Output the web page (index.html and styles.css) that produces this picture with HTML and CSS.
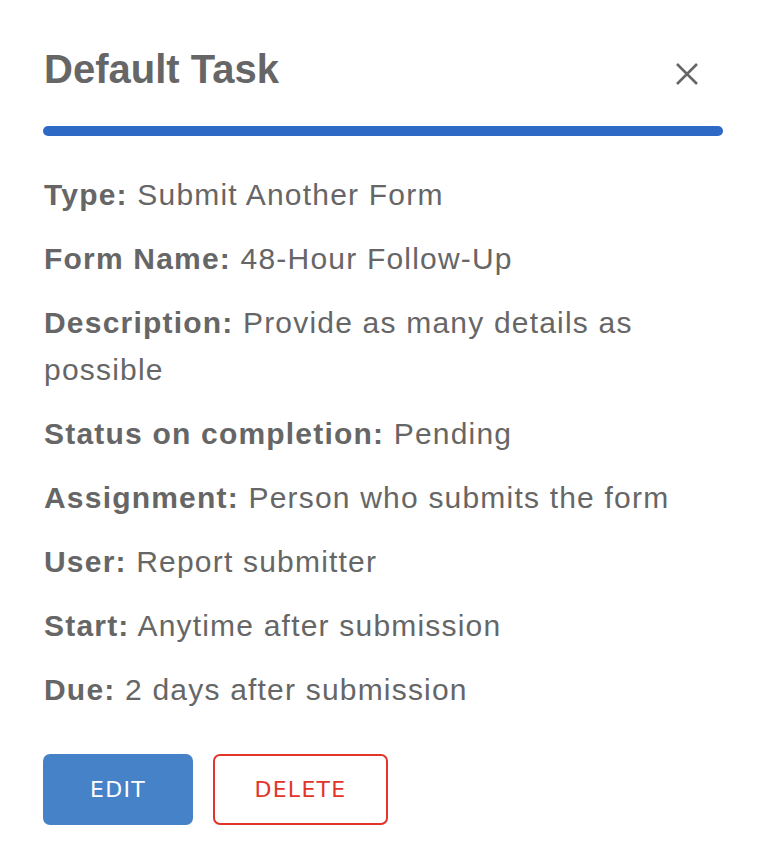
FILE: index.html
```html
<!DOCTYPE html>
<html>
<head>
<meta charset="utf-8">
<link rel="stylesheet" href="styles.css">
</head>
<body>
<div class="panel">
  <div class="header">
    <h1 class="title">Default Task</h1>
    <button class="close" aria-label="Close">
      <svg width="24" height="24" viewBox="0 0 24 24"><path d="M2 2 L22 22 M22 2 L2 22" stroke="#666" stroke-width="2.6" fill="none"/></svg>
    </button>
  </div>
  <div class="bar"></div>
  <div class="details">
    <p class="row"><b>Type:</b> Submit Another Form</p>
    <p class="row"><b>Form Name:</b> 48-Hour Follow-Up</p>
    <p class="row"><b>Description:</b> Provide as many details as possible</p>
    <p class="row"><b>Status on completion:</b> Pending</p>
    <p class="row"><b>Assignment:</b> Person who submits the form</p>
    <p class="row"><b>User:</b> Report submitter</p>
    <p class="row"><b>Start:</b> Anytime after submission</p>
    <p class="row"><b>Due:</b> 2 days after submission</p>
  </div>
  <div class="actions">
    <button class="btn btn-edit">EDIT</button>
    <button class="btn btn-delete">DELETE</button>
  </div>
</div>
</body>
</html>
```
FILE: styles.css
```css
html, body {
  margin: 0;
  padding: 0;
  background: #ffffff;
}
.panel {
  padding: 45px 47px 0 43px;
  font-family: "Liberation Sans", Arial, sans-serif;
  color: #666666;
}
.header {
  display: flex;
  justify-content: space-between;
  align-items: flex-start;
  height: 48px;
}
.title {
  margin: 0 0 0 1px;
  font-size: 40px;
  line-height: 48px;
  font-weight: bold;
  color: #666666;
}
.close {
  border: 0;
  background: none;
  padding: 0;
  margin: 17px 24px 0 0;
  width: 24px;
  height: 24px;
  cursor: pointer;
}
.close svg {
  display: block;
}
.bar {
  margin-top: 33px;
  height: 10px;
  border-radius: 5px;
  background: #2f69c6;
}
.details {
  margin-top: 35px;
  padding-left: 1px;
}
.row {
  margin: 0 0 17px 0;
  font-size: 30px;
  line-height: 47px;
  letter-spacing: 1.2px;
}
.row b {
  font-weight: bold;
}
.actions {
  display: flex;
  gap: 20px;
  margin-top: 41px;
}
.btn {
  height: 71px;
  border-radius: 7px;
  font-family: "DejaVu Sans", Verdana, sans-serif;
  font-size: 22px;
  letter-spacing: 1.3px;
  padding: 0;
  cursor: pointer;
}
.btn-edit {
  width: 150px;
  background: #4682c8;
  color: #ffffff;
  border: 0;
}
.btn-delete {
  width: 175px;
  background: #ffffff;
  color: #e3342a;
  border: 2px solid #e3342a;
}
```
